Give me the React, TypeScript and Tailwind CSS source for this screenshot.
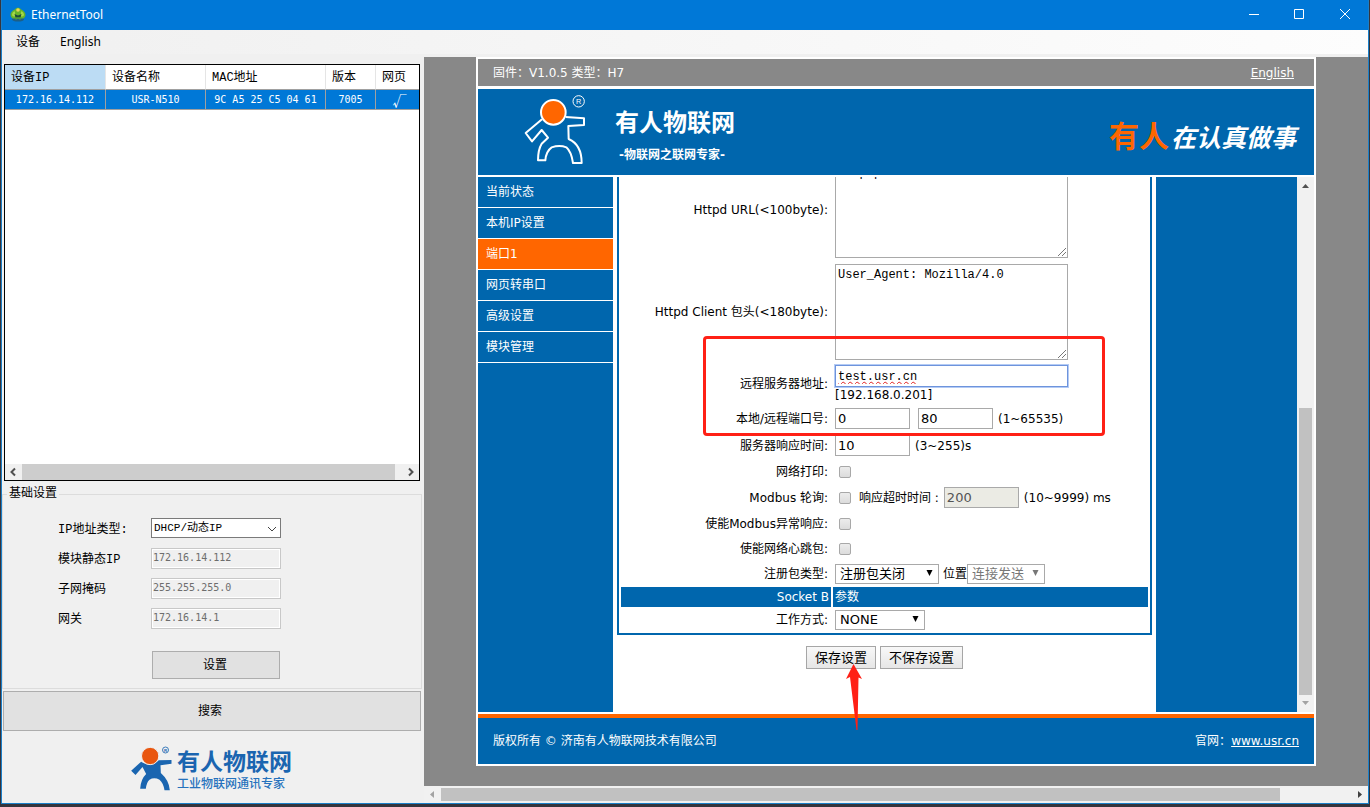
import type { ReactNode } from "react";

const songti = "font-['Liberation_Mono','Noto_Sans_CJK_SC',monospace]";
const digits = "font-['DejaVu_Sans_Mono','Noto_Sans_CJK_SC',monospace]";

function AppIcon() {
  return (
    <svg className="h-4 w-4" viewBox="0 0 16 16" aria-hidden="true">
      <ellipse cx="8" cy="12.4" rx="6" ry="2.2" fill="#1d5f86" />
      <path d="M0.5 8 C0.5 5 3 3 5 2.4 C6 0.2 10 0.2 11 2.4 C13 3 15.5 5 15.5 8 C15 11.5 12.5 12 11 11.4 L5 11.4 C3.5 12 1 11.5 0.5 8Z" fill="#67b52a" />
      <path d="M2 7.4 C2.5 5 4 4.5 5 4.5 L5 9.4 C3.5 9.4 2.2 9.4 2 7.4Z M14 7.4 C13.5 5 12 4.5 11 4.5 L11 9.4 C12.5 9.4 13.8 9.4 14 7.4Z" fill="#a5d84a" />
      <circle cx="8" cy="3" r="1.8" fill="#e9d45a" />
      <path d="M4.5 7 L8 8.6 L11.5 7 L10.5 10.5 L5.5 10.5Z" fill="#1c4a3a" />
      <path d="M5 10.5 H11 L10.4 13 L8 11.8 L5.6 13Z" fill="#4f9a3a" />
    </svg>
  );
}

function OutlineLogo() {
  return (
    <svg className="h-[72px] w-16 shrink-0" viewBox="160 130 192 216" aria-hidden="true">
      <g fill="none" stroke="#fff" strokeWidth="6" strokeLinejoin="round">
        <path d="M217 209 L168 250 L187 275 L216 241 L235 264 L216 282 Q205 300 205 332 L227 332 Q229 305 246 293 Q270 285 290 293 Q305 306 310 340 L336 340 Q336 285 297 268 L296 229 L343 226 L343 206 L288 202" />
        <circle cx="251" cy="188" r="37" fill="#f60" />
      </g>
      <circle cx="327" cy="155" r="17" fill="none" stroke="#fff" strokeWidth="3" />
      <text x="327" y="163" textAnchor="middle" fontSize="22" fill="#fff" fontFamily="Liberation Sans, sans-serif">R</text>
    </svg>
  );
}

function SolidLogo() {
  return (
    <svg className="h-[46px] w-[43px] shrink-0" viewBox="388 344 128 138" aria-hidden="true">
      <path d="M391 421 L421 394 Q448 414 474 390 L512 389 L512 400 L479 405 L480 428 Q505 450 507 480 L491 480 Q488 458 476 448 Q460 440 446 448 Q437 456 435 475 L418 475 Q420 446 436 431 L425 410 L404 434Z" fill="#1a65b0" />
      <circle cx="448" cy="377" r="26" fill="#e9560f" stroke="#f0f0f0" strokeWidth="3" />
      <circle cx="494" cy="359" r="9" fill="none" stroke="#1a65b0" strokeWidth="2.5" />
      <text x="494" y="364" textAnchor="middle" fontSize="13" fontWeight="bold" fill="#1a65b0" fontFamily="Liberation Sans, sans-serif">R</text>
    </svg>
  );
}

function Select({ id, value, width, disabled }: { id: string; value: string; width: string; disabled?: boolean }) {
  return (
    <span className={`relative inline-flex ${width}`}>
      <select
        id={id}
        disabled={disabled}
        className={`h-5 w-full appearance-none rounded-none border border-[#a9a9a9] bg-white pl-1 text-[13px] leading-[18px] opacity-100 ${disabled ? "text-[#777]" : "text-black"}`}
      >
        <option>{value}</option>
      </select>
      <svg className="pointer-events-none absolute top-1.5 right-1.5 h-1.5 w-[7px]" viewBox="0 0 7 6" aria-hidden="true">
        <path d="M0.5 0 H6.5 L3.5 6Z" fill={disabled ? "#777" : "#000"} />
      </svg>
    </span>
  );
}

function Row({ label, id, height, children }: { label: string; id: string; height: string; children: ReactNode }) {
  return (
    <div className={`grid grid-cols-[210px_1fr] gap-0.5 ${height}`}>
      <label htmlFor={id} className="self-center pr-[3px] text-right whitespace-nowrap">
        {label}
      </label>
      <div className="flex items-center px-0.5 whitespace-nowrap">{children}</div>
    </div>
  );
}

function TextArea({ id, value }: { id: string; value: string }) {
  return (
    <span className="relative flex">
      <textarea
        id={id}
        defaultValue={value}
        className={`h-24 w-[233px] resize-none border border-[#a9a9a9] bg-white p-0.5 text-[12px] leading-4 text-black ${songti}`}
      />
      <svg className="pointer-events-none absolute right-0.5 bottom-0.5 h-2 w-2" viewBox="0 0 8 8" stroke="#777" aria-hidden="true">
        <path d="M0 8 L8 0 M4 8 L8 4" />
      </svg>
    </span>
  );
}

function Field({ id, value, disabled }: { id: string; value: string; disabled?: boolean }) {
  return (
    <input
      id={id}
      aria-label={id}
      defaultValue={value}
      disabled={disabled}
      className={`h-[21px] w-[75px] border border-[#a9a9a9] px-0.5 text-[13px] ${disabled ? "bg-[#ebebe4] text-[#545454]" : "bg-white text-black"}`}
    />
  );
}

function Check({ id }: { id: string }) {
  return (
    <input
      id={id}
      type="checkbox"
      className="ml-1 h-3 w-3 appearance-none rounded-xs border border-[#a8a8a8] bg-linear-to-b from-[#ececec] to-[#dcdcdc]"
    />
  );
}

const menu = ["当前状态", "本机IP设置", "端口1", "网页转串口", "高级设置", "模块管理"];
const columns = [
  { name: "设备IP", value: "172.16.14.112", width: "w-[101px]" },
  { name: "设备名称", value: "USR-N510", width: "w-[100px]" },
  { name: "MAC地址", value: "9C A5 25 C5 04 61", width: "w-[120px]" },
  { name: "版本", value: "7005", width: "w-[50px]" },
  { name: "网页", value: "√", width: "w-auto" },
];
const addresses = [
  { id: "ip", label: "模块静态IP", value: "172.16.14.112" },
  { id: "mask", label: "子网掩码", value: "255.255.255.0" },
  { id: "gateway", label: "网关", value: "172.16.14.1" },
];

function DevicePanel() {
  return (
    <aside className={`flex w-[422px] shrink-0 flex-col text-[12px] text-black ${songti}`}>
      <div className="mt-[7px] mr-1 ml-0.5 flex h-[417px] flex-col border border-black bg-white">
        <table className="w-full table-fixed border-separate border-spacing-0">
          <thead>
            <tr className="h-[25px]">
              {columns.map((c, i) => (
                <th key={c.name} className={`${c.width} border-r border-b border-r-[#e5e5e5] border-b-[#a0a0a0] p-0 pt-0.5 pl-[6px] text-left leading-4 font-normal whitespace-nowrap last:border-r-0 ${i === 0 ? "bg-[#bcdcf4]" : ""}`}>
                  {c.name}
                </th>
              ))}
            </tr>
          </thead>
          <tbody>
            <tr className="h-5 bg-[#0078d7] text-white">
              {columns.map((c) => (
                <td key={c.name} className={`border-r border-b border-[#a0a0a0] p-0 pt-px text-center leading-4 whitespace-nowrap last:border-r-0 ${c.value === "√" ? "pl-1 text-[14px] font-['Noto_Sans_CJK_SC',sans-serif]" : `text-[10px] ${digits}`}`}>
                  {c.value}
                </td>
              ))}
            </tr>
          </tbody>
        </table>
        <div className="mt-auto flex h-4 items-stretch bg-[#f0f0f0]">
          <svg className="h-4 w-[17px]" viewBox="0 0 17 16" fill="none" stroke="#505050" strokeWidth="2" aria-hidden="true">
            <path d="M10 4.5 L6.5 8 L10 11.5" />
          </svg>
          <div className="mr-[7px] flex-1 bg-[#cdcdcd]" />
          <svg className="h-4 w-[17px]" viewBox="0 0 17 16" fill="none" stroke="#505050" strokeWidth="2" aria-hidden="true">
            <path d="M7 4.5 L10.5 8 L7 11.5" />
          </svg>
        </div>
      </div>
      <fieldset className="mt-1.5 mr-0.5 border border-[#dcdcdc] px-0 pt-[17px] pb-[9px] pl-[55px]">
        <legend className="-ml-[51px] px-0.5 leading-[14px]">基础设置</legend>
        <div className="grid grid-cols-[93px_130px] gap-y-[9px]">
          <label htmlFor="type" className="pt-1 leading-[17px]">IP地址类型:</label>
          <span className="relative flex">
            <select id="type" className="h-5 w-full appearance-none border border-[#7a7a7a] bg-white pl-0.5 text-[11px] leading-4">
              <option>DHCP/动态IP</option>
            </select>
            <svg className="pointer-events-none absolute top-[7px] right-1 h-2 w-2.5" viewBox="0 0 10 8" fill="none" stroke="#444" aria-hidden="true">
              <path d="M1 2 L5 6 L9 2" />
            </svg>
          </span>
          {addresses.map((a) => (
            <div key={a.id} className="contents">
              <label htmlFor={a.id} className="pt-1 leading-[17px]">{a.label}</label>
              <input id={a.id} disabled defaultValue={a.value} className={`h-[21px] border border-[#c8c8c8] bg-[#f0f0f0] px-px pb-0.5 text-[10px] text-[#6d6d6d] shadow-[inset_0_0_0_1px_#fff] ${digits}`} />
            </div>
          ))}
        </div>
        <button className="mt-[22px] ml-[94px] block h-7 w-32 border border-[#adadad] bg-[#e1e1e1] pt-0.5 pr-0.5">设置</button>
      </fieldset>
      <button className="mt-0.5 mr-[3px] ml-px h-10 shrink-0 border border-[#adadad] bg-[#e1e1e1] pt-0.5 pr-1">搜索</button>
      <div className="mt-3.5 flex items-start gap-1 pl-32 font-['Noto_Sans_CJK_SC',sans-serif] text-[#1a65b0]">
        <SolidLogo />
        <div className="pt-0.5">
          <div className="text-[23px] leading-[26px] font-bold">有人物联网</div>
          <div className="text-[12px] leading-5 font-medium text-[#2672bd]">工业物联网通讯专家</div>
        </div>
      </div>
    </aside>
  );
}

function PortForm() {
  return (
    <form className="flex h-full w-[543px] shrink-0 flex-col items-center justify-end overflow-hidden bg-white pb-[43px] text-black">
      <div className="relative flex w-[535px] shrink-0 flex-col gap-0.5 border-2 border-t-0 border-[#0066ad] p-0.5">
        <Row label="Httpd URL(<100byte):" id="url" height="h-[100px]">
          <TextArea id="url" value="/1.php?" />
        </Row>
        <Row label="Httpd Client 包头(<180byte):" id="head" height="h-[100px]">
          <TextArea id="head" value="User_Agent: Mozilla/4.0" />
        </Row>
        <Row label="远程服务器地址:" id="server" height="h-10">
          <div className="flex flex-col">
            <input
              id="server"
              defaultValue="test.usr.cn"
              className={`h-[22px] w-[233px] border border-[#6e94dc] bg-white px-0.5 pt-0.5 text-[12px] underline decoration-[#e02020] decoration-wavy decoration-1 shadow-[0_0_0_1px_#b4cbf5] outline-none ${songti}`}
            />
            <span className="leading-4">[192.168.0.201]</span>
          </div>
        </Row>
        <Row label="本地/远程端口号:" id="local" height="h-[25px]">
          <Field id="local" value="0" />
          <span className="mr-[5px] ml-2"><Field id="remote" value="80" /></span>
          <span>(1~65535)</span>
        </Row>
        <Row label="服务器响应时间:" id="wait" height="h-[25px]">
          <Field id="wait" value="10" />
          <span className="ml-[5px]">(3~255)s</span>
        </Row>
        <Row label="网络打印:" id="print" height="h-[23px]">
          <Check id="print" />
        </Row>
        <Row label="Modbus 轮询:" id="poll" height="h-[25px]">
          <Check id="poll" />
          <label htmlFor="timeout" className="mr-[5px] ml-2">响应超时时间 :</label>
          <Field id="timeout" value="200" disabled />
          <span className="ml-[5px]">(10~9999) ms</span>
        </Row>
        <Row label="使能Modbus异常响应:" id="error" height="h-[23px]">
          <Check id="error" />
        </Row>
        <Row label="使能网络心跳包:" id="beat" height="h-[23px]">
          <Check id="beat" />
        </Row>
        <Row label="注册包类型:" id="register" height="h-[23px]">
          <Select id="register" value="注册包关闭" width="w-[104px]" />
          <label htmlFor="place" className="ml-1">位置</label>
          <Select id="place" value="连接发送" width="w-[78px]" disabled />
        </Row>
        <div className="grid h-5 grid-cols-[210px_1fr] gap-0.5 leading-5 text-white">
          <div className="bg-[#0066ad] pr-0.5 text-right">Socket B</div>
          <div className="bg-[#0066ad] pl-0.5">参数</div>
        </div>
        <Row label="工作方式:" id="mode" height="h-[22px]">
          <Select id="mode" value="NONE" width="w-[90px]" />
        </Row>
        <div className="pointer-events-none absolute bottom-[197px] left-[84px] h-[100px] w-[402px] rounded-sm border-3 border-[#ff2016]" />
      </div>
      <div className="mt-[11px] flex shrink-0 gap-1">
        <button type="button" className="h-[23px] w-[70px] border border-[#a6a6a6] bg-linear-to-b from-[#f8f8f8] to-[#e6e6e6] text-[13px] leading-5">保存设置</button>
        <button type="button" className="h-[23px] w-[83px] border border-[#a6a6a6] bg-linear-to-b from-[#f8f8f8] to-[#e6e6e6] text-[13px] leading-5">不保存设置</button>
      </div>
    </form>
  );
}

function WebPage() {
  return (
    <div className="relative mx-auto mb-5 flex min-h-0 w-full max-w-[840px] flex-1 flex-col border-2 border-white bg-white font-['DejaVu_Sans','Noto_Sans_CJK_SC',sans-serif] text-[12px] text-white">
      <div className="flex h-[27px] shrink-0 items-center justify-between bg-[#888] pr-5 pl-[15px]">
        <span>固件：V1.0.5 类型：H7</span>
        <a href="#en" className="underline">English</a>
      </div>
      <header className="mt-[3px] mb-0.5 flex h-[86px] shrink-0 items-start bg-[#0066ad] pr-[18px] pl-[45px]">
        <div className="pt-1"><OutlineLogo /></div>
        <div className="pt-5 pl-7">
          <div className="text-[24px] leading-7 font-bold">有人物联网</div>
          <div className="mt-2 pl-1 leading-5 font-bold">-物联网之联网专家-</div>
        </div>
        <div className="ml-auto flex items-baseline pt-7 leading-10 font-bold">
          <span className="text-[30px] text-[#f60]">有人</span>
          <span className="pl-0.5 text-[25px] italic">在认真做事</span>
        </div>
      </header>
      <div className="flex min-h-0 flex-1 bg-[#0066ad]">
        <nav className="w-[135px] shrink-0">
          {menu.map((m, i) => (
            <a key={m} href={`#${i}`} className={`block h-[31px] border-b border-white pl-2 leading-[30px] ${i === 2 ? "bg-[#f60]" : ""}`}>
              {m}
            </a>
          ))}
        </nav>
        <PortForm />
        <div className="ml-auto flex w-[17px] flex-col items-center bg-[#f1f1f1]">
          <svg className="h-[17px] w-[17px]" viewBox="0 0 17 17" aria-hidden="true"><path d="M5 11 L8.5 7 L12 11Z" fill="#505050" /></svg>
          <div className="mt-auto h-[287px] w-[13px] bg-[#c1c1c1]" />
          <svg className="h-[17px] w-[17px]" viewBox="0 0 17 17" aria-hidden="true"><path d="M5 6 L8.5 10 L12 6Z" fill="#a3a3a3" /></svg>
        </div>
      </div>
      <footer className="mt-0.5 flex h-[50px] shrink-0 items-center justify-between border-t-4 border-[#f60] bg-[#0066ad] px-[15px]">
        <span>版权所有 © 济南有人物联网技术有限公司</span>
        <span>官网：<a href="#site" className="underline">www.usr.cn</a></span>
      </footer>
      <svg className="pointer-events-none absolute bottom-[34px] left-[368px] h-[66px] w-4" viewBox="0 0 16 66" aria-hidden="true">
        <path d="M7.5 0 L16 15 L12.5 13.5 L11.5 66 L10.5 66 L4 13 L0 15Z" fill="#ff2016" />
      </svg>
    </div>
  );
}

export default function App() {
  return (
    <div className="flex h-screen flex-col bg-[#35343c] pb-[3px] pl-px">
      <div className="mr-px flex min-h-0 flex-1 flex-col border border-t-0 border-[#1a7fc8] bg-[#f0f0f0]">
        <div className="flex h-[30px] shrink-0 items-center bg-[#0078d7] pl-2 font-['Noto_Sans',sans-serif] text-[12px] text-white">
          <AppIcon />
          <span className="pl-[5px]">EthernetTool</span>
          <div className="ml-auto flex">
            <button aria-label="Minimize" className="h-[30px] w-[46px]">
              <svg className="mx-auto h-3 w-3" viewBox="0 0 12 12" stroke="#fff" aria-hidden="true"><path d="M1 5.5 H11" /></svg>
            </button>
            <button aria-label="Maximize" className="h-[30px] w-[45px]">
              <svg className="mx-auto h-3 w-3" viewBox="0 0 12 12" fill="none" stroke="#fff" aria-hidden="true"><path d="M0.5 0.5 H9.5 V9.5 H0.5Z" /></svg>
            </button>
            <button aria-label="Close" className="h-[30px] w-[46px]">
              <svg className="mx-auto h-3 w-3" viewBox="0 0 12 12" stroke="#fff" aria-hidden="true"><path d="M1 0 L11 10 M11 0 L1 10" /></svg>
            </button>
          </div>
        </div>
        <div className="mb-[3px] flex h-6 shrink-0 items-center gap-5 bg-linear-to-r from-[#f0f0f0] to-[#fdfdfd] pl-3.5 font-['Noto_Sans','Noto_Sans_CJK_SC',sans-serif] text-[12px] text-black">
          <button>设备</button>
          <button>English</button>
        </div>
        <div className="flex min-h-0 flex-1">
          <DevicePanel />
          <main className="flex min-w-0 flex-1 flex-col bg-[#888]">
            <WebPage />
            <div className="flex h-[17px] shrink-0 items-center bg-[#f1f1f1]">
              <svg className="h-[17px] w-[17px]" viewBox="0 0 17 17" aria-hidden="true"><path d="M10 5 L6 8.5 L10 12Z" fill="#a3a3a3" /></svg>
              <div className="h-[13px] w-[839px] bg-[#c1c1c1]" />
              <svg className="ml-auto h-[17px] w-[17px]" viewBox="0 0 17 17" aria-hidden="true"><path d="M7 5 L11 8.5 L7 12Z" fill="#404040" /></svg>
            </div>
          </main>
        </div>
      </div>
    </div>
  );
}
